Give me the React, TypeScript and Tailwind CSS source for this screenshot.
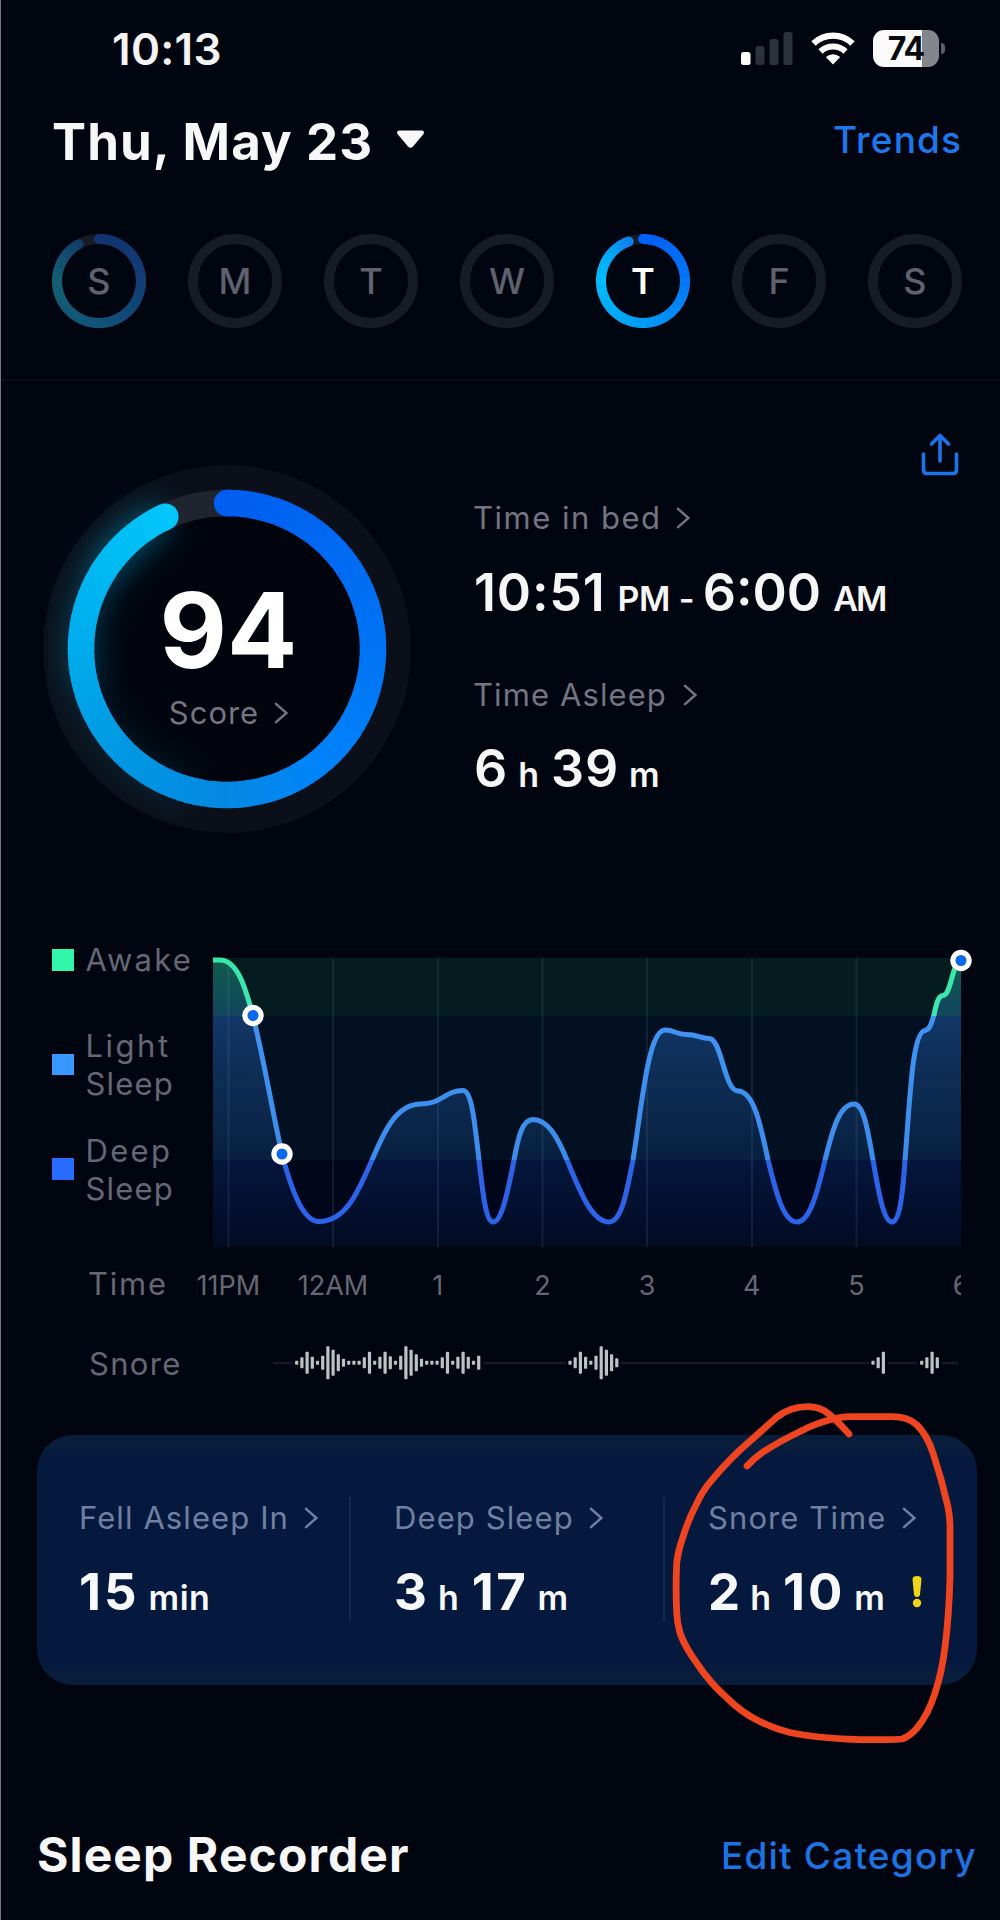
import React from "react";

type RGB = [number, number, number];
type Stop = [number, RGB];

const scoreStops: Stop[] = [
  [0, [0, 94, 240]],
  [90, [0, 116, 244]],
  [140, [0, 132, 250]],
  [180, [4, 137, 226]],
  [225, [0, 152, 226]],
  [270, [0, 172, 236]],
  [335, [0, 198, 250]],
];

const dayStops: Stop[] = [
  [0, [0, 96, 250]],
  [90, [4, 120, 250]],
  [180, [0, 158, 246]],
  [270, [0, 190, 255]],
  [305, [0, 172, 250]],
  [340, [16, 130, 240]],
];

const dimStops: Stop[] = [
  [0, [18, 52, 112]],
  [90, [18, 62, 118]],
  [180, [16, 84, 122]],
  [265, [20, 96, 116]],
  [300, [18, 82, 116]],
  [331, [18, 60, 104]],
];

function colorAt(stops: Stop[], deg: number) {
  let i = 0;
  while (i < stops.length - 2 && deg > stops[i + 1][0]) i++;
  const [a, ca] = stops[i];
  const [b, cb] = stops[i + 1];
  const t = Math.min(1, Math.max(0, (deg - a) / (b - a)));
  return `rgb(${ca.map((v, k) => Math.round(v + (cb[k] - v) * t)).join(",")})`;
}

function arc(cx: number, cy: number, r: number, from: number, to: number) {
  const p = (d: number) => {
    const a = ((d - 90) * Math.PI) / 180;
    return `${(cx + r * Math.cos(a)).toFixed(2)} ${(cy + r * Math.sin(a)).toFixed(2)}`;
  };
  return `M${p(from)} A${r} ${r} 0 ${to - from > 180 ? 1 : 0} 1 ${p(to)}`;
}

function SweepRing({ c, r, width, end, stops }: { c: number; r: number; width: number; end: number; stops: Stop[] }) {
  const step = 3;
  const parts: number[] = [];
  for (let d = 0; d < end; d += step) parts.push(d);
  return (
    <g fill="none" strokeWidth={width}>
      <path d={arc(c, c, r, 0, 1)} stroke={colorAt(stops, 0)} strokeLinecap="round" />
      <path d={arc(c, c, r, end - 1, end)} stroke={colorAt(stops, end)} strokeLinecap="round" />
      {parts.map((d) => (
        <path key={d} d={arc(c, c, r, d, Math.min(end, d + step + 0.6))} stroke={colorAt(stops, d)} />
      ))}
    </g>
  );
}

function Chevron() {
  return (
    <svg className="h-[22px] w-[14px] shrink-0" viewBox="0 0 14 22" fill="none" stroke="currentColor" strokeWidth="2.4">
      <path d="M1.2 1.2 12.4 11 1.2 20.8" />
    </svg>
  );
}

function StatusBar() {
  return (
    <div className="flex h-[117px] items-start justify-between pt-[27px] pl-[112px] pr-[55px]">
      <span className="text-[44px] leading-none font-semibold tracking-[0.3px] text-[#f4f4f5]">10:13</span>
      <div className="flex h-[43px] items-center">
        <svg className="h-10 w-[52px]" viewBox="0 0 52 40">
          <rect x="0" y="23" width="9.5" height="13" rx="2.5" fill="#fff" />
          <rect x="14.5" y="17" width="9" height="19" rx="2.5" fill="#2e313b" />
          <rect x="28.5" y="10" width="9" height="26" rx="2.5" fill="#2e313b" />
          <rect x="42.5" y="3" width="9" height="33" rx="2.5" fill="#2e313b" />
        </svg>
        <svg className="ml-[17px] h-10 w-[46px]" viewBox="0 0 46 40" fill="none" stroke="#fff">
          <path d="M3.500 14.500A28 28 0 0 1 42.500 14.500" strokeWidth="6.4" />
          <path d="M10.500 22.500A18 18 0 0 1 35.500 22.500" strokeWidth="6" />
          <path d="M23 35.500 15.800 28Q23 22.500 30.200 28Z" fill="#fff" stroke="none" />
        </svg>
        <div className="ml-[17px] flex h-[37px] w-[66px] items-center justify-center rounded-[11px] bg-[linear-gradient(90deg,#fafafa_74%,#85868b_74%)]">
          <span className="text-[32px] leading-none font-bold tracking-[-1px] text-[#080a10]">74</span>
        </div>
        <span className="ml-[2px] h-[11px] w-[4px] rounded-r-full bg-[#5d5f66]" />
      </div>
    </div>
  );
}

function Header() {
  return (
    <div className="flex h-[117px] items-start justify-between pr-[38px] pl-[52px]">
      <div className="flex items-start">
        <h1 className="-mt-px text-[51px] leading-none font-bold tracking-[1.1px] text-[#f7f7f8]">Thu, May 23</h1>
        <svg className="mt-[13px] ml-[23px] h-[19px] w-[29px]" viewBox="0 0 29 19" fill="#f7f7f8">
          <path d="M3 0.5H26Q29 1 27.500 4L17 16.500Q14.500 19 12 16.500L1.500 4Q0 1 3 .5Z" />
        </svg>
      </div>
      <a className="mt-1 text-[37px] leading-none font-medium tracking-[1.1px] text-[#1d78ee]">Trends</a>
    </div>
  );
}

const week = [
  { d: "S", ring: "dim" },
  { d: "M", ring: "" },
  { d: "T", ring: "" },
  { d: "W", ring: "" },
  { d: "T", ring: "active" },
  { d: "F", ring: "" },
  { d: "S", ring: "" },
];

function WeekStrip() {
  return (
    <div className="flex h-[147px] items-start justify-between border-b-2 border-[#070c16] pr-[38px] pl-[52px]">
      {week.map(({ d, ring }, i) => (
        <div key={i} className="grid size-[94px] place-items-center *:col-start-1 *:row-start-1">
          <svg className="size-[94px]" viewBox="0 0 94 94">
            <circle cx="47" cy="47" r="42" fill="none" stroke="#171b26" strokeWidth="10" />
            {ring === "dim" && <SweepRing c={47} r={42} width={10} end={331} stops={dimStops} />}
            {ring === "active" && <SweepRing c={47} r={42} width={10} end={340} stops={dayStops} />}
          </svg>
          <span
            className={
              ring === "active"
                ? "text-[36px] leading-none font-semibold text-white"
                : "text-[36px] leading-none font-medium text-[#5f626d]"
            }
          >
            {d}
          </span>
        </div>
      ))}
    </div>
  );
}

function ScoreRing() {
  return (
    <div className="grid h-[400px] w-[400px] shrink-0 *:col-start-1 *:row-start-1">
      <svg className="size-[400px]" viewBox="0 0 400 400">
        <defs>
          <filter id="glow" x="-30%" y="-30%" width="160%" height="160%">
            <feGaussianBlur stdDeviation="16" />
          </filter>
        </defs>
        <circle cx="200" cy="200" r="184" fill="#0a0f19" />
        <circle cx="200" cy="200" r="134" fill="#01040d" />
        <g fill="none" stroke="#00aadc" strokeWidth="30" filter="url(#glow)">
          <path d={arc(200, 200, 146, 195, 334)} opacity="0.16" />
          <path d={arc(200, 200, 146, 255, 334)} opacity="0.2" />
          <path d={arc(200, 200, 146, 300, 334)} opacity="0.3" />
        </g>
        <path d={arc(200, 200, 146, 334, 362)} fill="none" stroke="#20242f" strokeWidth="26.500" />
        <SweepRing c={200} r={146} width={26.5} end={335} stops={scoreStops} />
      </svg>
      <div className="flex flex-col items-center pt-[129px] pl-[3px]">
        <span className="text-[104px] leading-none font-bold text-white">94</span>
        <div className="mt-[15px] flex items-center gap-[15px] text-[#737582]">
          <span className="text-[31px] leading-none tracking-[1px]">Score</span>
          <Chevron />
        </div>
      </div>
    </div>
  );
}

function Summary() {
  return (
    <section className="flex h-[555px]">
      <div className="pt-[68px] pl-[27px]">
        <ScoreRing />
      </div>
      <div className="flex grow flex-col pl-[46px] text-[#f6f6f7]">
        <svg className="mt-[51px] mr-[41px] h-[44px] w-[38px] self-end" viewBox="0 0 38 44" fill="none" stroke="#1b74e8" strokeWidth="3.6" strokeLinecap="round" strokeLinejoin="round">
          <path d="M19 29V3.500M10.500 12 19 3.500 27.500 12M2.500 22V38Q2.500 41.500 6 41.500H32Q35.500 41.500 35.500 38V22" />
        </svg>
        <div className="mt-[26px] flex items-center gap-[14px] text-[#737582]">
          <span className="text-[31px] leading-none tracking-[1.5px]">Time in bed</span>
          <Chevron />
        </div>
        <div className="mt-[34px] ml-px flex items-baseline leading-none font-semibold">
          <span className="text-[52px] leading-none tracking-[0.8px]">10:51</span>
          <span className="ml-[12px] text-[34px] leading-none tracking-[-0.5px]">PM</span>
          <span className="ml-[9px] text-[34px] leading-none">-</span>
          <span className="ml-[8px] text-[52px] leading-none">6:00</span>
          <span className="ml-[12px] text-[34px] leading-none tracking-[-1.800px]">AM</span>
        </div>
        <div className="mt-[60px] flex items-center gap-[16px] text-[#737582]">
          <span className="text-[31px] leading-none tracking-[1.1px]">Time Asleep</span>
          <Chevron />
        </div>
        <div className="mt-[33px] ml-px flex items-baseline leading-none font-semibold">
          <span className="text-[52px] leading-none">6</span>
          <span className="ml-[11px] text-[34px] leading-none">h</span>
          <span className="ml-[12px] text-[52px] leading-none tracking-[0.8px]">39</span>
          <span className="ml-[10px] text-[34px] leading-none tracking-[1px]">m</span>
        </div>
      </div>
    </section>
  );
}

const curve =
  "M213 960H220C238 960 246 990 253 1016C264 1060 272 1110 282 1154C290 1185 302 1221.500 319 1221.500C346 1221.500 358 1192 372 1160C384 1132 396 1104 421 1104C442 1104 445 1090.500 463 1090.500C471 1090.500 474 1115 479 1160C483 1195 486 1222 493 1222C502 1222 508 1190 514 1160C518 1138 522 1119.500 533 1119.500C548 1119.500 558 1138 567 1160C580 1192 592 1222 609 1222C622 1222 627 1190 633 1160C642 1105 648 1030 665 1030C675 1030 676 1034.500 686 1034.500C698 1034.500 700 1038.500 709 1038.500C722 1038.500 724 1091 738 1091C754 1091 761 1127 768 1160C776 1192 783 1222 797 1222C810 1222 818 1190 825 1160C832 1132 839 1104 854 1104C864 1104 868 1132 873 1160C879 1195 884 1222 892 1222C900 1222 903 1190 905 1160C910 1100 912 1032 925 1030.500C931 1029.500 932 1020 934 1015C936 1005 938 995.500 943 995.500C949 995.500 951 978 955 968L961 960";

const hours = [228.5, 333, 438, 542.5, 647, 752, 856.5];

function SleepChart() {
  return (
    <svg className="h-[310px] w-[770px] shrink-0" viewBox="205 945 770 310">
      <defs>
        <linearGradient id="line" gradientUnits="userSpaceOnUse" x1="0" y1="958" x2="0" y2="1247">
          <stop offset="0" stopColor="#36e8a8" />
          <stop offset="0.2" stopColor="#3fe6b4" />
          <stop offset="0.2" stopColor="#4094f0" />
          <stop offset="0.7" stopColor="#3c8cec" />
          <stop offset="0.7" stopColor="#2d64e6" />
          <stop offset="1" stopColor="#2a62ea" />
        </linearGradient>
        <linearGradient id="area" gradientUnits="userSpaceOnUse" x1="0" y1="958" x2="0" y2="1247">
          <stop offset="0" stopColor="#0f5c4c" />
          <stop offset="0.2" stopColor="#12455e" />
          <stop offset="0.2" stopColor="#123666" />
          <stop offset="0.7" stopColor="#08203f" />
          <stop offset="0.7" stopColor="#04163c" />
          <stop offset="1" stopColor="#020b22" />
        </linearGradient>
      </defs>
      <rect x="213" y="958" width="748" height="58" fill="#041b1f" />
      <rect x="213" y="1016" width="748" height="144" fill="#021022" />
      <rect x="213" y="1160" width="748" height="87" fill="#01061a" />
      <path d={`${curve}V1247H213Z`} fill="url(#area)" />
      {hours.map((x) => (
        <path key={x} d={`M${x} 958V1247`} stroke="#8fa6c8" strokeOpacity="0.12" strokeWidth="2" />
      ))}
      <path d={curve} fill="none" stroke="url(#line)" strokeWidth="5" strokeLinejoin="round" />
      {[[253, 1015.5], [282, 1154], [961, 960.5]].map(([x, y]) => (
        <g key={x}>
          <circle cx={x} cy={y} r="10.700" fill="#fff" />
          <circle cx={x} cy={y} r="5.500" fill="#0a68ec" />
        </g>
      ))}
    </svg>
  );
}

const pulse = [4, 11, 22, 12, 4, 14, 33, 26, 17, 8, 4, 4, 4, 11, 22, 4, 12, 22, 13, 4, 14, 33, 26, 17, 8, 4, 4, 4, 11, 22, 4, 12, 22, 12, 4, 14];
const bursts: [number, number[]][] = [
  [296.7, pulse],
  [570, [4, 11, 22, 12, 4, 14, 33, 26, 17, 9]],
  [873, [4, 11, 22]],
  [921.7, [4, 11, 22, 11]],
];

function SnoreTrack() {
  return (
    <svg className="h-10 w-[688px]" viewBox="273 1343 688 40">
      <path d="M273 1363H292M484 1363H566M621 1363H869M888 1363H917M942 1363H958" stroke="#141924" strokeWidth="2.500" />
      {bursts.map(([x0, hs]) =>
        hs.map((h, i) => (
          <rect key={`${x0}-${i}`} x={x0 + i * 5.2 - 1.6} y={1362.700 - h / 2} width="3.200" height={h} rx="0.8" fill="#bfc1c4" />
        )),
      )}
    </svg>
  );
}

function Timeline() {
  return (
    <section className="h-[499px] text-[#656874]">
      <div className="flex h-[327px] items-start pt-[9px] pl-[52px]">
        <ul className="-mt-1 w-[153px] shrink-0 text-[31px] leading-[38.300px]">
          <li className="flex h-[46px] items-center gap-[12px] pb-2">
            <span className="size-[21.500px] bg-[#31f5a8]" />
            <span className="tracking-[2.200px]">Awake</span>
          </li>
          <li className="mt-[40px] flex items-center gap-[12px]">
            <span className="mb-[2px] size-[21.500px] bg-[#3a97ff]" />
            <span className="flex flex-col">
              <span className="tracking-[2.500px]">Light</span>
              <span className="tracking-[1.200px]">Sleep</span>
            </span>
          </li>
          <li className="mt-[28px] flex items-center gap-[12px]">
            <span className="mb-[2px] size-[21.500px] bg-[#286cff]" />
            <span className="flex flex-col">
              <span className="tracking-[2.300px]">Deep</span>
              <span className="tracking-[1.200px]">Sleep</span>
            </span>
          </li>
        </ul>
        <SleepChart />
      </div>
      <div className="flex h-20 items-baseline pt-[5px] pl-[88px]">
        <span className="w-[88px] shrink-0 text-[31px] leading-none tracking-[1.800px]">Time</span>
        <div className="flex w-[785px] overflow-x-clip text-center text-[27px] leading-[36px] *:w-[104.700px] *:shrink-0">
          <span>11PM</span>
          <span>12AM</span>
          <span>1</span>
          <span>2</span>
          <span>3</span>
          <span>4</span>
          <span>5</span>
          <span>6</span>
        </div>
      </div>
      <div className="flex h-10 items-center pl-[89px]">
        <span className="w-[184px] text-[31px] leading-none tracking-[1.300px]">Snore</span>
        <SnoreTrack />
      </div>
    </section>
  );
}

function Stat({ label, children }: { label: React.ReactNode; children: React.ReactNode }) {
  return (
    <div className="flex flex-col pt-[67px]">
      <div className="flex items-center gap-[15px] text-[#7080a0]">
        {label}
        <Chevron />
      </div>
      <div className="mt-[33px] flex items-baseline font-bold text-[#f7f8fa]">{children}</div>
    </div>
  );
}

function StatsCard() {
  return (
    <section className="relative ml-[37px] h-[250px] w-[940px] shrink-0">
      <div className="grid h-full grid-cols-[314px_314px_1fr] rounded-[36px] bg-[linear-gradient(180deg,#081d3c_0,#081d3c_5%,#05193f_9%,#05193f_91%,#081d3c_95%)]">
        <div className="flex justify-between pl-[42px]">
          <Stat label={<span className="text-[31px] leading-none tracking-[1.100px]">Fell Asleep In</span>}>
            <span className="text-[51px] leading-none tracking-[3px]">15</span>
            <span className="ml-[9px] text-[34px] leading-none font-semibold tracking-[0.500px]">min</span>
          </Stat>
          <span className="mt-[62px] h-[124px] w-[2px] bg-[#172a4e]" />
        </div>
        <div className="flex justify-between pl-[43px]">
          <Stat label={<span className="text-[31px] leading-none tracking-[1.100px]">Deep Sleep</span>}>
            <span className="text-[51px] leading-none">3</span>
            <span className="ml-[11px] text-[34px] leading-none font-semibold">h</span>
            <span className="ml-[13px] text-[51px] leading-none tracking-[2.500px]">17</span>
            <span className="ml-[9px] text-[34px] leading-none font-semibold tracking-[1px]">m</span>
          </Stat>
          <span className="mt-[62px] h-[124px] w-[2px] bg-[#172a4e]" />
        </div>
        <div className="pl-[43px]">
          <Stat label={<span className="text-[31px] leading-none tracking-[1.100px]">Snore Time</span>}>
            <span className="text-[51px] leading-none">2</span>
            <span className="ml-[10px] text-[34px] leading-none font-semibold">h</span>
            <span className="ml-[12px] text-[51px] leading-none tracking-[3px]">10</span>
            <span className="ml-[9px] text-[34px] leading-none font-semibold tracking-[1px]">m</span>
            <svg className="ml-[26px] h-[34px] w-[10px]" viewBox="0 0 10 34" fill="#f0d418">
              <path d="M0.500 3Q0.800 0 5 0T9.500 3L8 18.500Q7.600 21 5 21T2 18.500Z" />
              <circle cx="5" cy="27" r="4.200" />
            </svg>
          </Stat>
        </div>
      </div>
      <svg className="pointer-events-none absolute -top-[45px] left-[623px] h-[370px] w-[310px]" viewBox="660 1390 310 370" fill="none" stroke="#ef4420" strokeWidth="6.800" strokeLinecap="round" strokeLinejoin="round">
        <path d="M747 1466Q754 1458 763 1452Q780 1441 800 1431.500Q816 1423 833 1419Q842 1416.700 851 1416.700H892Q908 1416.700 917 1425Q927 1435 933 1453Q942 1480 948 1507Q950 1517 950 1527V1577Q949 1616 945 1647Q942 1672 935 1693Q928 1715 917 1728Q909 1737 902 1739Q896 1740 857 1739.500Q815 1738 790 1732.500Q772 1728 757 1720Q741 1712 727 1698Q710 1683 697 1663.500Q685 1647 680 1633Q677 1623 676.700 1612Q675.500 1588 676.700 1563Q678 1551 683 1537Q688 1520 697 1503Q701 1494 707 1486Q722 1467 740 1450L777 1417Q790 1406.700 808 1406.700Q816 1406.700 823 1410Q832 1415 849 1434" />
      </svg>
    </section>
  );
}

export default function App() {
  return (
    <main className="flex h-[1920px] w-full flex-col overflow-hidden border-l border-[#74777c] bg-[#010510] font-['Inter',sans-serif]">
      <div className="-ml-px flex flex-col">
        <StatusBar />
        <Header />
        <WeekStrip />
        <Summary />
        <Timeline />
        <StatsCard />
        <footer className="mt-[146px] flex h-[60px] items-start justify-between pr-[23px] pl-[37px]">
          <h2 className="text-[48px] leading-none font-bold tracking-[1.100px] text-[#f7f7f8]">Sleep Recorder</h2>
          <a className="mt-[6px] text-[37px] leading-none font-medium tracking-[1.200px] text-[#1c73e2]">Edit Category</a>
        </footer>
      </div>
    </main>
  );
}
